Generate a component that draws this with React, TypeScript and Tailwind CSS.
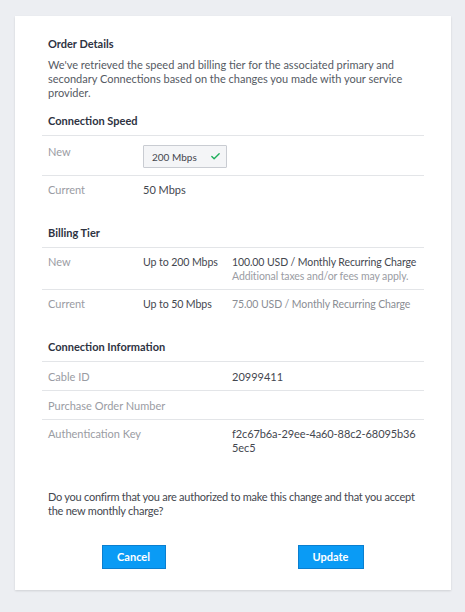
import { Check } from 'lucide-react';

function SectionTitle({ children }: { children: React.ReactNode }) {
  return (
    <h2 className="px-[6px] pb-[7px] text-[11px] leading-[14px] font-bold text-[#2e3342] border-b border-[#e3e5e8]">
      {children}
    </h2>
  );
}

export default function App() {
  return (
    <div
      className="min-h-[612px] bg-[#eceef2] pt-[16px] pl-[15px] pr-[14px] pb-[20px]"
      style={{ fontFamily: 'Lato, "Liberation Sans", sans-serif' }}
    >
      <div className="bg-white px-[27px] pt-[21px] pb-[21px] shadow-[0_1px_2px_rgba(0,0,0,0.12)]">
        <div className="px-[6px]">
          <h1 className="text-[11px] leading-[14px] font-bold text-[#2e3342]">Order Details</h1>
          <p className="mt-[7px] text-[11px] leading-[14px] text-[#555a63]">
            We've retrieved the speed and billing tier for the associated primary and secondary
            Connections based on the changes you made with your service provider.
          </p>
        </div>

        <section className="mt-[14px]">
          <SectionTitle>Connection Speed</SectionTitle>
          <div className="flex px-[6px] pt-[9px] pb-[7px] border-b border-[#e3e5e8] text-[11px] leading-[14px]">
            <span className="w-[95px] shrink-0 text-[#9a9ca3]">New</span>
            <div className="flex items-center justify-between w-[84px] h-[23px] pl-[8px] pr-[5px] border border-[#c9ccd2] bg-[#f4f5f7] rounded-[1px]">
              <span className="text-[10px] text-[#44474f]">200 Mbps</span>
              <Check size={11} strokeWidth={3} className="text-[#1fae5b]" />
            </div>
          </div>
          <div className="flex px-[6px] py-[7px] text-[11px] leading-[14px]">
            <span className="w-[95px] shrink-0 text-[#9a9ca3]">Current</span>
            <span className="text-[#44474f]">50 Mbps</span>
          </div>
        </section>

        <section className="mt-[22px]">
          <SectionTitle>Billing Tier</SectionTitle>
          <div className="flex px-[6px] pt-[7px] pb-[6px] border-b border-[#e3e5e8] text-[11px] leading-[14px]">
            <span className="w-[95px] shrink-0 text-[#9a9ca3]">New</span>
            <span className="w-[89px] shrink-0 text-[10.6px] tracking-[-0.1px] text-[#44474f]">Up to 200 Mbps</span>
            <div className="whitespace-nowrap text-[10.5px] tracking-[-0.1px]">
              <div className="text-[#44474f]">100.00 USD / Monthly Recurring Charge</div>
              <div className="text-[#9a9ca3]">Additional taxes and/or fees may apply.</div>
            </div>
          </div>
          <div className="flex px-[6px] py-[7px] text-[11px] leading-[14px]">
            <span className="w-[95px] shrink-0 text-[#9a9ca3]">Current</span>
            <span className="w-[89px] shrink-0 text-[10.6px] tracking-[-0.1px] text-[#44474f]">Up to 50 Mbps</span>
            <span className="whitespace-nowrap text-[10.5px] tracking-[-0.1px] text-[#8a8d94]">
              75.00 USD / Monthly Recurring Charge
            </span>
          </div>
        </section>

        <section className="mt-[22px]">
          <SectionTitle>Connection Information</SectionTitle>
          <div className="flex px-[6px] pt-[8px] pb-[6px] border-b border-[#e3e5e8] text-[11px] leading-[14px]">
            <span className="w-[184px] shrink-0 text-[#9a9ca3]">Cable ID</span>
            <span className="text-[#44474f]">20999411</span>
          </div>
          <div className="flex px-[6px] pt-[8px] pb-[6px] border-b border-[#e3e5e8] text-[11px] leading-[14px]">
            <span className="w-[184px] shrink-0 text-[#9a9ca3]">Purchase Order Number</span>
            <span className="text-[#44474f]"></span>
          </div>
          <div className="flex px-[6px] py-[7px] text-[11px] leading-[14px]">
            <span className="w-[184px] shrink-0 text-[#9a9ca3]">Authentication Key</span>
            <span className="w-[192px] break-all tracking-[-0.1px] text-[#44474f]">
              f2c67b6a-29ee-4a60-88c2-68095b365ec5
            </span>
          </div>
        </section>

        <p className="mt-[28px] px-[6px] text-[11px] leading-[14px] tracking-[-0.25px] text-[#44474f]">
          Do you confirm that you are authorized to make this change and that you accept the new
          monthly charge?
        </p>

        <div className="mt-[27px] grid grid-cols-2">
          <div className="flex justify-center pr-[8px]">
            <button className="w-[64px] h-[24px] bg-[#0a9bf5] border border-[#0a7fd0] text-white text-[11px] font-bold">
              Cancel
            </button>
          </div>
          <div className="flex justify-center pl-[4px]">
            <button className="w-[66px] h-[24px] bg-[#0a9bf5] border border-[#0a7fd0] text-white text-[11px] font-bold">
              Update
            </button>
          </div>
        </div>
      </div>
    </div>
  );
}
